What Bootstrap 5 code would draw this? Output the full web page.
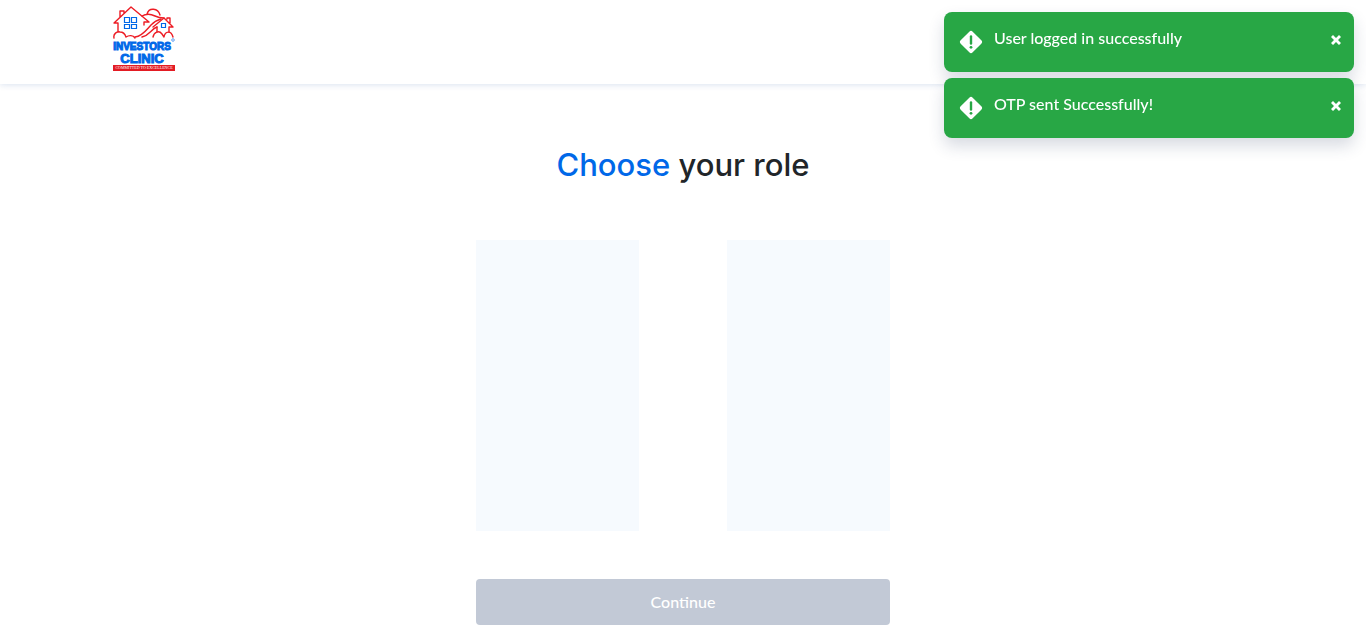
<!DOCTYPE html>
<html lang="en">
<head>
<meta charset="utf-8">
<meta name="viewport" content="width=device-width, initial-scale=1">
<title>Choose your role - Investors Clinic</title>
<link href="https://cdn.jsdelivr.net/npm/bootstrap@5.3.0/dist/css/bootstrap.min.css" rel="stylesheet">
<style>
  body { font-family: Lato, "Liberation Sans", sans-serif; background: #fff; }
  .site-header { height: 84px; padding-top: 6px; box-shadow: 0 1px 6px rgba(30, 80, 160, .16); }
  .role-heading { font-family: Inter, "Liberation Sans", sans-serif; font-size: 31px; line-height: 42px; font-weight: 500; margin: 60px 0 54px; color: #212529; }
  .role-heading span { color: #0068e8; }
  .role-panel { width: 414px; max-width: 100%; }
  .role-choices { gap: 88px; margin-bottom: 48px; }
  .role-choice { height: 291px; background: #f6fafe; }
  .btn-continue { height: 46px; font-size: 16px; font-weight: 500; border-radius: 4px; }
  .btn-continue:disabled { background: #c2c9d6; color: #fff; border: 0; opacity: 1; }
  .toast-stack { padding: 12px; gap: 6px; width: 434px; max-width: 100%; z-index: 1080; }
  .notice { height: 60px; gap: 11px; padding: 0 12px 0 15px; border-radius: 8px; background: #28a745; color: #fff; box-shadow: 0 8px 16px rgba(40, 55, 95, .18); font-size: 16px; font-weight: 500; line-height: 20px; }
  .notice-close { width: 12px; height: 12px; margin-top: 22px; }
  .logo-word { font: bold 10px "Liberation Sans", sans-serif; fill: #0068e8; stroke: #0068e8; stroke-width: 1px; }
  .logo-word-lg { font-size: 13px; }
  .logo-tag { font: 4px "Liberation Serif", serif; fill: #fff; }
</style>
</head>
<body>
<header class="site-header bg-white">
  <div class="container p-0">
    <a href="#" class="d-inline-block" aria-label="Investors Clinic">
      <svg class="d-block" width="64" height="66" viewBox="0 0 64 66">
        <g fill="none" stroke="#ed1c24" stroke-width="1.4" stroke-linejoin="round" stroke-linecap="round">
          <path d="M1 17 18 1l18 15h-5v3M1 17h4v9M7 11V5h4v2"/>
          <path d="M1 32c-1-4 3-7 6-6 3 0 5 2 6 5 3-2 7-2 9 1"/>
          <path d="M22 31c8-1 12-8 16-12 3-3 6-5 10-6M29 31c8-2 9-8 15-10"/>
          <path d="M29 10c5-3 9-2 13 0 4 2 6 2 9 2M34 8c2-7 11-6 13 1"/>
          <path d="m40 21 11-9 9 9h-4v5M44 21v5M54 13v-1h3v5"/>
          <path d="M40 31c1-5 6-7 9-3l2 3c1-6 7-7 9 0"/>
        </g>
        <path d="M11.500 11.500h5v5h-5zM18.500 11.500h5v5h-5zM11.500 18.500h5v4h-5zM18.500 18.500h5v4h-5zM48.500 17.500h4v4h-4z" fill="none" stroke="#0068e8" stroke-width="1.200"/>
        <text class="logo-word" x="29" y="44" text-anchor="middle">INVESTORS</text>
        <text class="logo-word logo-word-lg" x="29" y="57" text-anchor="middle">CLINIC</text>
        <circle cx="60" cy="34" r="1.300" fill="none" stroke="#0068e8" stroke-width=".6"/>
        <path d="M0 59h62v6H0z" fill="#e31b23"/>
        <text class="logo-tag" x="31" y="63" text-anchor="middle">COMMITTED TO EXCELLENCE</text>
      </svg>
    </a>
  </div>
</header>

<main class="container d-flex flex-column align-items-center">
  <h1 class="role-heading text-center"><span>Choose</span> your role</h1>
  <div class="role-panel">
    <div class="role-choices d-flex">
      <div class="role-choice flex-fill"></div>
      <div class="role-choice flex-fill"></div>
    </div>
    <button type="button" class="btn btn-continue w-100" disabled>Continue</button>
  </div>
</main>

<div class="toast-stack position-fixed top-0 end-0 d-flex flex-column">
  <div class="notice d-flex" role="alert">
    <svg class="flex-shrink-0 align-self-center" width="24" height="24" viewBox="0 0 24 24" aria-hidden="true">
      <path d="M10.3 1.700a2.400 2.400 0 0 1 3.400 0l8.600 8.600a2.400 2.400 0 0 1 0 3.400l-8.600 8.600a2.400 2.400 0 0 1-3.400 0l-8.600-8.600a2.400 2.400 0 0 1 0-3.400z" fill="#fff"/>
      <path d="M12 6.500v7" stroke="#28a745" stroke-width="2.400" stroke-linecap="round"/><circle cx="12" cy="17.300" r="1.400" fill="#28a745"/>
    </svg>
    <div class="flex-grow-1 pt-3">User logged in successfully</div>
    <button type="button" class="notice-close btn p-0 border-0 d-flex" aria-label="Close">
      <svg width="12" height="12" viewBox="0 0 12 12"><path d="m3 1 3 3 3-3 2 2-3 3 3 3-2 2-3-3-3 3-2-2 3-3-3-3z" fill="#fff"/></svg>
    </button>
  </div>
  <div class="notice d-flex" role="alert">
    <svg class="flex-shrink-0 align-self-center" width="24" height="24" viewBox="0 0 24 24" aria-hidden="true">
      <path d="M10.3 1.700a2.400 2.400 0 0 1 3.400 0l8.600 8.600a2.400 2.400 0 0 1 0 3.400l-8.600 8.600a2.400 2.400 0 0 1-3.400 0l-8.600-8.600a2.400 2.400 0 0 1 0-3.400z" fill="#fff"/>
      <path d="M12 6.500v7" stroke="#28a745" stroke-width="2.400" stroke-linecap="round"/><circle cx="12" cy="17.300" r="1.400" fill="#28a745"/>
    </svg>
    <div class="flex-grow-1 pt-3">OTP sent Successfully!</div>
    <button type="button" class="notice-close btn p-0 border-0 d-flex" aria-label="Close">
      <svg width="12" height="12" viewBox="0 0 12 12"><path d="m3 1 3 3 3-3 2 2-3 3 3 3-2 2-3-3-3 3-2-2 3-3-3-3z" fill="#fff"/></svg>
    </button>
  </div>
</div>
<script src="https://cdn.jsdelivr.net/npm/bootstrap@5.3.0/dist/js/bootstrap.bundle.min.js"></script>
</body>
</html>
